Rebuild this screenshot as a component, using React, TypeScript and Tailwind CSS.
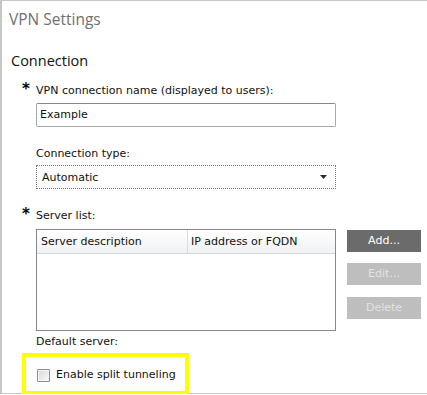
import React from "react"

function Asterisk() {
	return (
		<span className="relative -top-[2px] w-[14px] shrink-0 text-[15px] font-bold leading-[14px] text-black">*</span>
	)
}

function SideButton({ label, enabled, className = "" }: { label: string; enabled?: boolean; className?: string }) {
	return (
		<div
			className={
				enabled
					? "flex h-[22px] w-[74px] items-center justify-center bg-[#6b6b6b] text-white " + className
					: "flex h-[22px] w-[74px] items-center justify-center bg-[#bebebe] text-[#e2e2e2] " + className
			}
		>
			{label}
		</div>
	)
}

export default function App() {
	return (
		<div className="relative h-[394px] w-[427px] border-t border-b border-l-2 border-[#c6c6c6] bg-white">
			<div className="pl-[7px] pt-[8px] font-['Open_Sans',sans-serif] text-[15.5px] leading-[20px] text-[#707070]">
				VPN Settings
			</div>
			<div className="mt-[22px] pl-[9px] font-['Open_Sans',sans-serif] text-[14.5px] leading-[20px] text-[#111]">
				Connection
			</div>

			<div className="pl-[20px] font-['DejaVu_Sans',sans-serif] text-[11px] leading-[14px] text-[#111]">
				<div className="mt-[13px] flex">
					<Asterisk />
					<span>VPN connection name (displayed to users):</span>
				</div>
				<div className="ml-[14px] mt-[5px] flex h-[24px] w-[300px] items-center rounded-[2px] border border-[#a4a9b0] border-t-[#85898f] pl-[3px]">
					Example
				</div>

				<div className="mt-[20px] pl-[14px]">Connection type:</div>
				<div className="ml-[14px] mt-[4px] flex h-[24px] w-[300px] items-center justify-between border border-dotted border-[#7a7a7a] pl-[5px] pr-[8px]">
					<span className="pt-[2px]">Automatic</span>
					<svg width="7" height="4" viewBox="0 0 7 4">
						<path d="M0 0 H7 L3.5 4 Z" fill="#2a2a2a" />
					</svg>
				</div>

				<div className="mt-[20px] flex">
					<Asterisk />
					<span>Server list:</span>
				</div>
				<div className="mt-[6px] flex gap-[11px] pl-[14px]">
					<div className="h-[102px] w-[300px] border border-[#828790] bg-white">
						<div className="flex h-[24px] border-b border-[#d5d5d5] bg-linear-to-b from-white to-[#f1f2f4]">
							<div className="flex w-[151px] items-center border-r border-[#dcdcdc] pl-[4px]">
								Server description
							</div>
							<div className="flex items-center pl-[3px]">IP address or FQDN</div>
						</div>
					</div>
					<div className="flex flex-col pt-[1px]">
						<SideButton label="Add..." enabled />
						<SideButton label="Edit..." className="mt-[11px]" />
						<SideButton label="Delete" className="mt-[12px]" />
					</div>
				</div>

				<div className="mt-[4px] pl-[14px]">Default server:</div>

				<div className="mt-[19px] flex items-center pl-[15px]">
					<span className="h-[13px] w-[13px] rounded-[1px] border border-[#8e8f8f] bg-linear-to-br from-[#d8d9da] to-[#fafafa] shadow-[inset_0_0_0_1px_#f4f4f4]" />
					<span className="ml-[6px]">Enable split tunneling</span>
				</div>
			</div>

			<div className="pointer-events-none absolute left-[20px] top-[352px] h-[42px] w-[167px] border-4 border-[#ffff00]" />
		</div>
	)
}
